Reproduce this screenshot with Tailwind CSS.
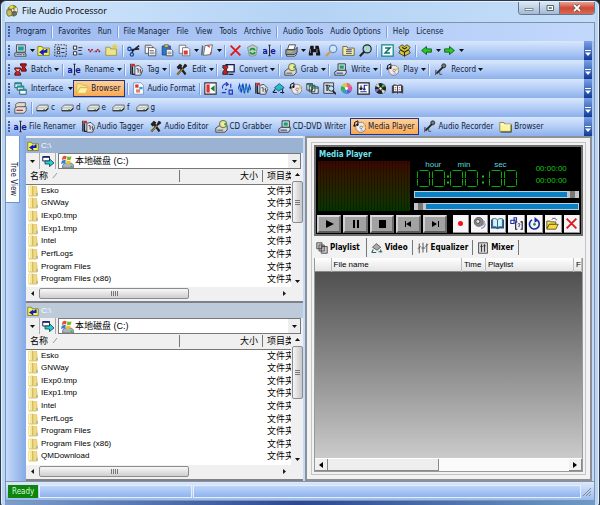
<!DOCTYPE html>
<html lang="en">
<head>
<meta charset="utf-8">
<meta name="viewport" content="width=device-width, initial-scale=1">
<title>File Audio Processor</title>
<script src="https://cdn.jsdelivr.net/npm/@tailwindcss/browser@4"></script>
</head>
<body class="bg-[#20242c] font-['DejaVu_Sans_Condensed','DejaVu_Sans',sans-serif] text-[8px] leading-[12px] text-[#101c38]">

<svg class="hidden" aria-hidden="true">
  <symbol id="logo" viewBox="0 0 16 16"><circle cx="9" cy="7" r="6.5" fill="#a8a020" stroke="#55561a"/><path d="M9 7 14 3A6 6 0 0 1 15 9Z" fill="#e8e8d0"/><path d="M9 7 4 2.500A6 6 0 0 1 10 1Z" fill="#e3dc4a"/><circle cx="9" cy="7" r="2" fill="#fff" stroke="#444"/><path d="M1 7 6 6 8 10 8 14 3 15 1 12Z" fill="#c8c050" stroke="#555"/><path d="M9 10 13 9 14 13 10 15Z" fill="#777" stroke="#444"/></symbol>
  <symbol id="pc" viewBox="0 0 16 16"><path d="M3 1h11v9H3z" fill="#d8d8d8" stroke="#334"/><path d="M5 3h7v5H5z" fill="#18a0a0"/><path d="M1 11h13l1 4H1z" fill="#e4e4e4" stroke="#334"/><path d="M3 13h7" stroke="#2a60c0"/><path d="M11 13h2" stroke="#0a0" stroke-width="1.500"/></symbol>
  <symbol id="up" viewBox="0 0 16 16"><path d="M1 3h5l1 2h8v9H1z" fill="#f6f05a" stroke="#77701c"/><path d="M12 6v4H5M7.500 7.500 4 10l3.500 2.500z" fill="#1020c0" stroke="#1020c0" stroke-width="1.600"/></symbol>
  <symbol id="sel" viewBox="0 0 16 16"><path d="M1 1h14v14H1z" fill="none" stroke="#111" stroke-dasharray="2 1.500"/><path d="M4 4h3v3H4zM4 9h3v3H4z" fill="#fff" stroke="#111"/><path d="M9 5.500h4M9 10.500h4" stroke="#111"/></symbol>
  <symbol id="list" viewBox="0 0 16 16"><path d="M3 2.500h4v4H3zM3 9.500h4v4H3z" fill="#fff" stroke="#111"/><path d="M9 4.500h5M9 8h4M9 12.500h5" stroke="#111"/></symbol>
  <symbol id="dots" viewBox="0 0 16 16"><path d="M0 6h2v2H0zM2 8h2v2H2zM4 6h2v2H4zM7 9h1v1H7z" fill="#a01024"/><path d="M9 8h2v2H9zM11 6h2v2h-2zM13 8h2v2h-2z" fill="#a01024"/></symbol>
  <symbol id="newf" viewBox="0 0 16 16"><path d="M1 4h5l1 2h7v8H1z" fill="#eee48a" stroke="#9a8c30"/><path d="M12 0v7M8.500 3.500h7M9.500 1l5 5M14.500 1l-5 5" stroke="#e8cc20" stroke-width="1.100"/></symbol>
  <symbol id="cut" viewBox="0 0 16 16"><path d="m15 2-9 7M15 6 5 7" stroke="#223" stroke-width="2"/><circle cx="3" cy="6" r="2" fill="none" stroke="#1a4ca0" stroke-width="1.600"/><circle cx="6" cy="13" r="2" fill="none" stroke="#1a4ca0" stroke-width="1.600"/><path d="M6 11 8 7" stroke="#223" stroke-width="1.500"/></symbol>
  <symbol id="copy" viewBox="0 0 16 16"><path d="M1.500 1.500h7l2 2v8h-9z" fill="#fff" stroke="#444"/><path d="M5.500 4.500h7l2 2v8h-9z" fill="#fff" stroke="#444"/><path d="M7 8h5M7 10h6M7 12h6M3 4h4" stroke="#667"/></symbol>
  <symbol id="paste" viewBox="0 0 16 16"><path d="M1.500 2.500h10v11h-10z" fill="#2a78d0" stroke="#123c80"/><path d="M4 1h5v3H4z" fill="#e8d060" stroke="#554"/><path d="M6.500 6.500h6l2 2v6h-8z" fill="#fff" stroke="#444"/><path d="M8 10h5M8 12h5" stroke="#667"/></symbol>
  <symbol id="clone" viewBox="0 0 16 16"><path d="M1.500 1.500h8v10h-8z" fill="#fff" stroke="#667"/><path d="M5.500 4.500h7l2 2v8h-9z" fill="#fff" stroke="#667"/><path d="M7 8h5v5H7z" fill="#e03a3a"/></symbol>
  <symbol id="rot" viewBox="0 0 16 16"><path d="m5 2 9-1-2 12-9 1z" fill="#fff" stroke="#555"/><path d="M2 2 1 14" stroke="#667" stroke-width="2"/><path d="M8 2l3 2M13 10l-2 2" stroke="#e03a3a" stroke-width="1.500"/></symbol>
  <symbol id="x" viewBox="0 0 16 16"><path d="M2 2 14 14M14 2 2 14" stroke="#e01818" stroke-width="2.200"/></symbol>
  <symbol id="bin" viewBox="0 0 16 16"><path d="M2 4 8 1l6 3-2 10-5 1-3-1z" fill="#c4ccc8" stroke="#788"/><path d="M5 8c1-3 5-3 6 0M11 10c-1 3-5 3-6 0" fill="none" stroke="#109830" stroke-width="2"/></symbol>
  <symbol id="ae" viewBox="0 0 16 16"><text x="-1" y="12" font-family="DejaVu Sans" font-size="10" font-weight="bold" fill="#181890">a</text><text x="9" y="12" font-family="DejaVu Sans" font-size="10" font-weight="bold" fill="#181890">e</text><path d="M6.500 1.500H8v13H6.500M9.500 1.500H8v13h1.500" fill="none" stroke="#222"/></symbol>
  <symbol id="print" viewBox="0 0 16 16"><path d="M5 1h8l-2 6H3z" fill="#fff" stroke="#333"/><path d="M1 7h11l3-3v6l-3 3H1z" fill="#9098a0" stroke="#333"/><path d="M2 13h10l2-2v2l-2 2H2z" fill="#ddd" stroke="#333"/><path d="M3 9.500h6" stroke="#e8d040"/></symbol>
  <symbol id="bino" viewBox="0 0 16 16"><path d="M3 2h4v4h2V2h4l2 9v3h-5v-4H6v4H1v-3z" fill="#151515"/><path d="M3 11V6M11 11V6" stroke="#aaa"/></symbol>
  <symbol id="zoom" viewBox="0 0 16 16"><circle cx="10" cy="6" r="4.500" fill="#cbe6fa" stroke="#6a90c0" stroke-width="1.500"/><path d="m7 9-6 6" stroke="#d09a50" stroke-width="2.500"/></symbol>
  <symbol id="flist" viewBox="0 0 16 16"><path d="M1 3h5l1 2h8v9H1z" fill="#f6f08a" stroke="#555"/><path d="M5 7h7M5 9h7M5 11.500h7" stroke="#22a"/></symbol>
  <symbol id="mag" viewBox="0 0 16 16"><circle cx="10" cy="6" r="5" fill="#a8d8d0" stroke="#222" stroke-width="1.400"/><path d="m7 9-6 6" stroke="#222" stroke-width="2.400"/></symbol>
  <symbol id="z" viewBox="0 0 16 16"><path d="M1 1h14v14H1z" fill="#fff" stroke="#0a8888" stroke-width="1.500"/><path d="M5 5h6L5 11h6" fill="none" stroke="#0a7070" stroke-width="1.800"/></symbol>
  <symbol id="box" viewBox="0 0 16 16"><path d="m1 4 4-3 3 2 3-2 4 3-2 3 2 4-7 4-7-4 2-4z" fill="#d8c830" stroke="#333"/><path d="m3 7 5 3 5-3M8 10v5M5 4l3 2 3-2" fill="none" stroke="#222" stroke-width="1.300"/></symbol>
  <symbol id="left" viewBox="0 0 16 16"><path d="M2 8 8 3v3h6v4H8v3z" fill="#20d020" stroke="#124a12"/></symbol>
  <symbol id="right" viewBox="0 0 16 16"><path d="M14 8 8 3v3H2v4h6v3z" fill="#20d020" stroke="#124a12"/></symbol>
  <symbol id="batch" viewBox="0 0 16 16"><path d="M8 1h7v2l-2 2 2 3v2H9V8l2-3-3-2z" fill="#c01818" stroke="#400"/><path d="M1 6h7v2L6 10l2 3v2H1v-2l2-3-2-2z" fill="#d02020" stroke="#311"/><path d="M2 8h5l-2 2z" fill="#fff"/></symbol>
  <symbol id="tag" viewBox="0 0 16 16"><path d="M1 1v13M3 4v10h4" stroke="#222" fill="none" stroke-width="1.500"/><path d="M2 1h4v3H2z" fill="#e02020"/><path d="m6 4 5-1 5 5-3 7H6z" fill="#e8e8f0" stroke="#333"/><path d="M8 7h2v5M12 7.500c2 0 2 2 0 2 2 0 2 3 0 3" fill="none" stroke="#222"/></symbol>
  <symbol id="edit" viewBox="0 0 16 16"><path d="M2 5 6 1l3 2-1 2 6 8-2 2-6-8-2 1z" fill="#222"/><path d="M14 2 3 14" stroke="#222" stroke-width="2.500"/><path d="m10 7-8 8" stroke="#c09020" stroke-width="1.300"/><path d="m12 1 3 3-3 2-2-2z" fill="#222"/></symbol>
  <symbol id="conv" viewBox="0 0 16 16"><path d="M5 2h10v9H5z" fill="#f0f4f8" stroke="#181850" stroke-width="1.600"/><path d="M1 3h6v3L5 8l2 3v3H1v-3l2-3-2-2z" fill="#c02020" stroke="#222"/><path d="M8 14h6" stroke="#222" stroke-width="1.500"/></symbol>
  <symbol id="grab" viewBox="0 0 16 16"><path d="m1 10 4-3h10v5l-3 3H1z" fill="#d8d8d0" stroke="#333"/><circle cx="10" cy="5" r="4.500" fill="#e8e888" stroke="#555"/><path d="m10 5 4-2v4z" fill="#30b040"/><circle cx="10" cy="5" r="1" fill="#fff"/><path d="M3 12.500h7" stroke="#333"/></symbol>
  <symbol id="write" viewBox="0 0 16 16"><path d="M5 1h9v8H5z" fill="#cce8e0" stroke="#222"/><path d="M7 3h5v4H7z" fill="#1a9a80"/><path d="m1 11 3-2h11v3l-2 3H1z" fill="#ddd" stroke="#222"/><path d="M3 12.500h8" stroke="#2040a0" stroke-width="1.300"/></symbol>
  <symbol id="play" viewBox="0 0 16 16"><circle cx="9.500" cy="9" r="6.200" fill="#f4e6e6" stroke="#807474"/><path d="m10 9 4-4 1.500 4z" fill="#e8d060"/><path d="m10 9-1 5.500 4-1z" fill="#a8c8ec"/><circle cx="10" cy="9" r="1.500" fill="#fff" stroke="#777"/><path d="M2 7V3l4-2v5" fill="none" stroke="#111" stroke-width="1.200"/><circle cx="1.800" cy="7" r="1.400" fill="#111"/><circle cx="5.400" cy="6" r="1.400" fill="#111"/></symbol>
  <symbol id="mic" viewBox="0 0 16 16"><circle cx="12" cy="3.500" r="2.500" fill="#777" stroke="#222"/><path d="M11 5 3 13" stroke="#222" stroke-width="2.200"/><path d="M2 15V9l3 2M7 10v4h3" fill="none" stroke="#444"/></symbol>
  <symbol id="intf" viewBox="0 0 16 16"><path d="M1 1h8v6H1z" fill="#e8f4f4" stroke="#145"/><path d="M1 2h8" stroke="#18989a" stroke-width="2"/><path d="M4 5h8v5H4z" fill="#e8f4f4" stroke="#145"/><path d="M4 6h8" stroke="#18989a" stroke-width="2"/><path d="M7 9h8v6H7z" fill="#fff" stroke="#145"/><path d="M7 10h8" stroke="#18989a" stroke-width="2"/></symbol>
  <symbol id="fopen" viewBox="0 0 16 16"><path d="M1 2h5l2 2h5v3H5l-4 7z" fill="#f4e48a" stroke="#d8b848"/><path d="M5 7h10l-3 7H1z" fill="#fbf0a4" stroke="#d8b848"/></symbol>
  <symbol id="afmt" viewBox="0 0 16 16"><path d="M2 1h9l3 3v11H2z" fill="#fff" stroke="#7090c0"/><path d="M4 3h4v4H4z" fill="#e03030"/><path d="M9 6h4v3H9z" fill="#30a0d0"/><path d="M5 9h5v4H5z" fill="#e08060"/></symbol>
  <symbol id="pic" viewBox="0 0 16 16"><path d="M1 1h14v14H1z" fill="#fff" stroke="#333" stroke-width="1.400"/><path d="M3 3h4v10H3z" fill="#e03030"/><path d="m13 4-5 4 5 4z" fill="#108040"/></symbol>
  <symbol id="abc" viewBox="0 0 16 16"><path d="M2 8c-1-4 3-7 6-5M6 0l3 3-3 2" fill="none" stroke="#2038b0" stroke-width="1.300"/><path d="M10 10h4v5h-4zM5 9h2M1 13h5M12 2v5" fill="none" stroke="#2038b0" stroke-width="1.400"/></symbol>
  <symbol id="wave" viewBox="0 0 16 16"><path d="M0 9 2 3l2 10L6 2l2 12 2-12 2 11 2-9 2 6" fill="none" stroke="#1838d0" stroke-width="1.300"/><path d="m1 12 3-8 3 9 3-9 3 9 2-8" fill="none" stroke="#20a0a0"/></symbol>
  <symbol id="dia" viewBox="0 0 16 16"><path d="m9 2 6 5-7 4-5-4z" fill="#20c0c8" stroke="#246"/><path d="M1 13h5M4 9l-3 4M13 9v5M10 13h5" stroke="#123" stroke-width="1.300"/></symbol>
  <symbol id="stack" viewBox="0 0 16 16"><path d="M1 2h7v8H1zM4 4h7v8H4zM7 6h8v8H7z" fill="#e4ecec" stroke="#222"/><path d="M1 3h7M4 5h7M7 7.500h8" stroke="#268070" stroke-width="1.500"/></symbol>
  <symbol id="tq" viewBox="0 0 16 16"><path d="M1 1h12v13H1z" fill="#d8e0f0" stroke="#222"/><path d="M3 4h4M5 4v7M8 4v7" stroke="#222" stroke-width="1.500"/><circle cx="10" cy="8" r="3.300" fill="#bde8f0" stroke="#222"/><path d="m12 11 4 4" stroke="#222" stroke-width="2"/></symbol>
  <symbol id="wheel" viewBox="0 0 16 16"><g stroke="none"><path d="M8 8V1a7 7 0 0 1 6 3.500z" fill="#e87060"/><path d="m8 8 6-3.500a7 7 0 0 1 0 7z" fill="#e050a0"/><path d="m8 8 6 3.500A7 7 0 0 1 8 15z" fill="#6060d0"/><path d="M8 8v7a7 7 0 0 1-6-3.500z" fill="#30a0c0"/><path d="m8 8-6 3.500a7 7 0 0 1 0-7z" fill="#30b050"/><path d="M8 8 2 4.500A7 7 0 0 1 8 1z" fill="#d8c850"/></g><circle cx="8" cy="8" r="1.800" fill="#fff"/></symbol>
  <symbol id="ndoc" viewBox="0 0 16 16"><path d="M1 1h14v14H1z" fill="#fff" stroke="#222" stroke-width="1.500"/><path d="M9 9V4h4M4 5h2M4 12h8" fill="none" stroke="#2030a0" stroke-width="1.500"/><circle cx="5" cy="8" r="2" fill="#222"/><circle cx="9" cy="9" r="1.500" fill="#2030a0"/></symbol>
  <symbol id="bdisc" viewBox="0 0 16 16"><circle cx="8" cy="8" r="6.800" fill="#222"/><path d="M8 8 2 5l3-3.500zM8 8l6 3-3 3.500z" fill="#d8e0c0"/><path d="m8 8 3-6 3 3z" fill="#50b060"/><path d="M8 8 3 13l-1.500-4z" fill="#8070c0"/><circle cx="8" cy="8" r="2" fill="#fff" stroke="#222"/></symbol>
  <symbol id="book" viewBox="0 0 16 16"><path d="m1 5 3-2 4 1 4-1 3 2v9l-6-1-1 2-1-2-6 1z" fill="#444"/><path d="M3 4h4l1 1 1-1h4v8H9l-1 1-1-1H3z" fill="#fff" stroke="#222"/><path d="M8 5v8" stroke="#222"/><path d="M4.500 7h2M4.500 9.500h2M9.500 7h2M9.500 9.500h2" fill="none" stroke="#903090"/></symbol>
  <symbol id="drvs" viewBox="0 0 16 16"><path d="m2 4 3-2h9v4l-3 2H2z" fill="#e8d8c8" stroke="#555"/><path d="m1 9 3-2h11v5l-3 3H1z" fill="#dedede" stroke="#444"/><path d="M3 11.500h8" stroke="#b03020" stroke-width="1.500"/></symbol>
  <symbol id="drv" viewBox="0 0 16 16"><path d="m1 8 3-3h11v4l-3 3H1z" fill="#e6e6e6" stroke="#555"/><path d="M1 8.500h11l3-3" fill="none" stroke="#aaa"/><path d="M1 12h11l3-3" fill="none" stroke="#222" stroke-width="1.500"/><path d="M9 10.500h2" stroke="#0a0"/></symbol>
  <symbol id="fold" viewBox="0 0 16 16"><path d="M1 3h5l1 2h8v9H1z" fill="#fbf3a0" stroke="#8a7c28"/><path d="M2 6h12" stroke="#fff"/><path d="M15 6v9H2" fill="none" stroke="#333"/></symbol>
  <symbol id="zipf" viewBox="0 0 10 12"><path d="M0 1 5 0v11H0z" fill="#f6e69a"/><path d="M5 1h4l1 10H5z" fill="#e8d07a"/><path d="M4.500 1v10" stroke="#d8bc5c"/><path d="M1.500 2v8" stroke="#fff8d0"/><path d="M7 2v8" stroke="#f4e49c"/><path d="M9 8v2.500" stroke="#68b0c8"/><path d="M1 11h8" stroke="#dcc478"/></symbol>
  <symbol id="win" viewBox="0 0 16 16"><path d="M4 10h9l3 3v3H2v-3z" fill="#a8b4bc" stroke="#667"/><path d="M12 14h2" stroke="#0c0" stroke-width="1.500"/><path d="M2 2c2-2 4-1 5-.500L6 5.500C5 5 3 5 1 6z" fill="#e85028"/><path d="M8 1.500c2 1 3 1 5 0L12 5.500c-2 1-3 1-5 0z" fill="#70b830"/><path d="M1 7c2-1 4-1 5-.500l-1 4c-1-.500-3-.500-5 .500z" fill="#3080d8"/><path d="M7 6.500c2 1 3 1 5 0l-1 4c-2 1-3 1-5 0z" fill="#f0c020"/></symbol>
  <symbol id="swap" viewBox="0 0 16 16"><path d="M1 2h9v6H1z" fill="#fff" stroke="#1a2060" stroke-width="1.300"/><path d="M1 3h9" stroke="#1a2060" stroke-width="1.500"/><path d="M4 8h6V5l6 5.500-6 5V12H4z" fill="#20d0d0" stroke="#134"/></symbol>
  <symbol id="spk" viewBox="0 0 16 16"><circle cx="7" cy="6" r="5.500" fill="#888" stroke="#555"/><circle cx="6" cy="5.500" r="2.500" fill="#ddd" stroke="#444"/><path d="M9 11c3 0 5-3 5-6M10 14c4-1 5-4 5-6" fill="none" stroke="#9090b8" stroke-width="1.500"/></symbol>
  <symbol id="bbook" viewBox="0 0 16 16"><path d="M0 3h6l2 1 2-1h6v11h-6l-2 1-2-1H0z" fill="#1a5a90"/><path d="M2 2h4l2 1.500V13l-2-1H2zM14 2h-4L8 3.500V13l2-1h4z" fill="#d8f0fa" stroke="#267"/></symbol>
  <symbol id="rand" viewBox="0 0 16 16"><path d="M1 4h4v4H1zM5 1h3v3H5z" fill="#fff" stroke="#1828a0" stroke-width="1.300"/><path d="M9 6H7v9h2M13 6h2v9h-2" fill="none" stroke="#111" stroke-width="1.300"/><path d="M10 9c0-1.500 2.500-1.500 2 .500L11 11v1.500" fill="none" stroke="#1828a0" stroke-width="1.200"/></symbol>
  <symbol id="loop" viewBox="0 0 16 16"><path d="M5 3.500a6 6 0 1 0 7 1" fill="none" stroke="#1828a0" stroke-width="2"/><path d="m8 0 5 4-5 3z" fill="#1828a0"/><circle cx="8" cy="9" r="1.700" fill="#10a040"/></symbol>
  <symbol id="ofold" viewBox="0 0 16 16"><path d="M1 5h4l1 1h6v3H4l-3 5z" fill="#f0e060" stroke="#544408"/><path d="M4 9h11l-3 6H1z" fill="#f8d840" stroke="#544408"/><path d="M7 3c2-2 5-2 6 1" fill="none" stroke="#222"/></symbol>
  <symbol id="gstack" viewBox="0 0 16 16"><path d="M1 1h7v8H1zM4 4h7v8H4zM7 6h8v9H7z" fill="#c8c8c8" stroke="#333"/></symbol>
  <symbol id="gvid" viewBox="0 0 16 16"><path d="m7 2 6 5-5 4-6-4z" fill="#aaa" stroke="#444"/><path d="M1 14h6M3 10l-2 4M10 13h5M13 10v4" stroke="#1a6a6a" stroke-width="1.500"/></symbol>
  <symbol id="geq" viewBox="0 0 16 16"><path d="M3 2v13M8 1v13M13 2v12M1 9l4-3M6 8h5M11 6l4-3" stroke="#555" stroke-width="1.300"/></symbol>
  <symbol id="gmix" viewBox="0 0 16 16"><path d="M2 1h12v14H2z" fill="#d4d4d4" stroke="#333"/><path d="M6 3v10M10 3v10M4.500 6h3M8.500 5h3" stroke="#333" stroke-width="1.300"/></symbol>
</svg>

<div class="flex min-h-screen w-full flex-col rounded-t-md rounded-b border border-[#30384a] bg-[#bad6f5] px-1 shadow-[inset_0_0_0_1px_#e4f2ff]">

  <header class="mt-px flex h-5 shrink-0 items-start justify-between bg-linear-to-r from-[#d2e6fb] via-[#b4d3f5] to-[#c4def8]">
    <h1 class="flex items-center gap-1 pt-px pl-px font-['Open_Sans','Noto_Sans',sans-serif] text-[9px] leading-[16px] text-black">
      <svg class="size-3"><use href="#logo"/></svg>File Audio Processor
    </h1>
    <div class="flex h-[13px] overflow-hidden rounded-b border border-t-0 border-[#66788f]">
      <button aria-label="Minimize" class="grid w-[21px] place-items-center border-r border-[#66788f] bg-linear-to-b from-[#dbe8f6] to-[#a4bad4]"><svg viewBox="0 0 10 8" class="h-2 w-2.5"><path d="M1 4.500h8v2H1z" fill="#fff" stroke="#566" stroke-width=".7"/></svg></button>
      <button aria-label="Maximize" class="grid w-5 place-items-center border-r border-[#66788f] bg-linear-to-b from-[#dbe8f6] to-[#a4bad4]"><svg viewBox="0 0 10 8" class="h-2 w-2.5"><path d="M2 1.500h6.500v5H2z" fill="#fff" stroke="#566"/><path d="M4 3.500h2.500v1H4z" fill="#9ab" stroke="#566" stroke-width=".7"/></svg></button>
      <button aria-label="Close" class="grid w-[34px] place-items-center bg-linear-to-b from-[#e8a090] via-[#cc4a38] to-[#d86a50]"><svg viewBox="0 0 10 8" class="h-2 w-2.5"><path d="m2 1 6 6M8 1 2 7" stroke="#544" stroke-width="3"/><path d="m2 1 6 6M8 1 2 7" stroke="#fff" stroke-width="1.800"/></svg></button>
    </div>
  </header>

  <div class="flex flex-1 flex-col border border-[#7f93ad] bg-[#a9c5f3]">
    <nav id="menu" class="flex h-[18px] shrink-0 items-center gap-px bg-linear-to-r from-[#9dbaf0] to-[#c2d8fb]"></nav>
    <div id="bars"></div>

    <main class="flex flex-1 bg-[#c3daf9] pr-0.5">
      <aside class="flex w-5 shrink-0 bg-linear-to-r from-[#c4dafa] to-[#86aae4]">
        <button class="flex h-[67px] w-[14px] justify-center border-r border-b border-[#6f93cf] bg-white pt-5 [writing-mode:vertical-rl]">Tree View</button>
      </aside>
      <section id="files" class="flex min-w-0 flex-[277] flex-col bg-[#f0f0f0] pt-0.5"></section>

      <section class="ml-0.5 flex min-w-0 flex-[275] flex-col border-2 border-[#8d9196] bg-[#f2f2f2] p-1">
        <div class="flex flex-1 flex-col border border-[#c4c4c4] p-0.5">
          <div class="border-2 border-[#6e6e6e] bg-black p-px">
            <h2 class="pl-0.5 leading-[13px] font-bold text-[#6fe6f0]">Media Player</h2>
            <div class="flex gap-1 px-px">
              <div class="h-[50px] flex-[92] bg-linear-to-b from-[#3a0500] via-[#252200] to-[#003400]">
                <div class="h-full bg-[repeating-linear-gradient(90deg,transparent_0_2px,rgba(0,0,0,0.25)_2px_3px)]"></div>
              </div>
              <div class="flex flex-[166] flex-col">
                <div class="flex">
                  <div class="w-[108px] font-['Liberation_Sans',Arial,sans-serif] leading-[8px] text-[#5fd4dc]">
                    <div class="flex pl-1"><span class="w-[33px] text-center">hour</span><span class="w-8 text-center">min</span><span class="w-[45px] text-center">sec</span></div>
                    <svg role="img" aria-label="00:00:00" viewBox="0 0 108 19" class="h-[19px] w-[108px]" fill="none" stroke="#08a808">
                      <g id="lcd" stroke-width="1"><path d="M5.500 1.500h9M5.500 17.500h9M3.500 2.500v6.500M3.500 10v6.500M15.500 2.500v6.500M15.500 10v6.500"/></g>
                      <use href="#lcd" x="15"/><use href="#lcd" x="33"/><use href="#lcd" x="48"/><use href="#lcd" x="72"/><use href="#lcd" x="87"/>
                      <path d="M33 7.500h2M33 13.500h2M68 7.500h2M68 13.500h2" stroke-width="2" stroke="#20c020"/>
                    </svg>
                  </div>
                  <div class="flex-1 pt-0.5 pl-3.5 font-['Liberation_Sans',Arial,sans-serif] leading-[12px] text-[#14c814]"><div>00:00:00</div><div>00:00:00</div></div>
                </div>
                <div class="mt-[3px] flex flex-col gap-[5px]">
                  <input type="range" aria-label="Position" min="0" max="100" value="100" class="h-[7px] w-full appearance-none border border-[#b8d0dc] bg-[#0c80c4] [&::-webkit-slider-thumb]:h-[7px] [&::-webkit-slider-thumb]:w-[11px] [&::-webkit-slider-thumb]:appearance-none [&::-webkit-slider-thumb]:border-x-3 [&::-webkit-slider-thumb]:border-[#c4c4c4] [&::-webkit-slider-thumb]:bg-[#787878]">
                  <input type="range" aria-label="Volume" min="0" max="100" value="0" class="h-[7px] w-full appearance-none border border-[#b8d0dc] bg-[#0c80c4] [&::-webkit-slider-thumb]:h-[7px] [&::-webkit-slider-thumb]:w-[11px] [&::-webkit-slider-thumb]:appearance-none [&::-webkit-slider-thumb]:border-x-3 [&::-webkit-slider-thumb]:border-[#c4c4c4] [&::-webkit-slider-thumb]:bg-[#787878]">
                </div>
              </div>
            </div>
            <div class="mt-1 flex gap-1.5">
              <div id="transport" class="flex flex-[131] gap-0.5"></div>
              <div id="tools" class="flex flex-[128] gap-0.5"></div>
            </div>
          </div>

          <div role="tablist" class="mt-0.5 mb-px flex h-[19px] items-center font-bold text-black">
            <button role="tab" aria-selected="true" class="flex h-full items-center gap-0.5 border-r border-[#777] pr-1.5 pl-0.5"><svg class="size-3"><use href="#gstack"/></svg>Playlist</button>
            <button role="tab" class="flex h-[15px] items-center gap-0.5 border-r border-[#777] px-1"><svg class="size-3"><use href="#gvid"/></svg>Video</button>
            <button role="tab" class="flex h-[15px] items-center gap-0.5 border-r border-[#777] px-1"><svg class="size-3"><use href="#geq"/></svg>Equalizer</button>
            <button role="tab" class="flex h-[15px] items-center gap-0.5 border-r border-[#777] px-1"><svg class="size-3"><use href="#gmix"/></svg>Mixer</button>
          </div>
          <div class="flex flex-1 flex-col border border-t-0 border-[#999] bg-linear-to-b from-[#484848] to-[#d4d4d4]">
            <table class="w-full table-fixed border-collapse bg-linear-to-b from-white to-[#e2e2e2] font-['Liberation_Sans',Arial,sans-serif] leading-[13px] text-black">
              <thead><tr class="border-b border-[#888] text-left [&>th]:overflow-hidden [&>th]:border-r [&>th]:border-[#bbb] [&>th]:pl-0.5 [&>th]:font-normal [&>th]:whitespace-nowrap">
                <th class="w-4"></th><th>File name</th><th class="w-6">Time</th><th class="w-[88px]">Playlist</th><th class="w-2">F</th>
              </tr></thead>
            </table>
            <div class="flex-1"></div>
            <div class="flex h-[13px] border-t border-white bg-[#fafafa]">
              <button aria-label="Scroll left" class="grid w-[13px] place-items-center border-r border-b border-[#888] bg-[#f0f0f0]"><svg viewBox="0 0 6 6" class="size-1.5"><path d="M5 0v6L1 3z"/></svg></button>
              <div class="w-[111px] border-r border-b border-[#888] bg-[#eee]"></div>
              <div class="flex-1"></div>
              <button aria-label="Scroll right" class="grid w-[13px] place-items-center border-r border-b border-[#888] bg-[#f0f0f0]"><svg viewBox="0 0 6 6" class="size-1.5"><path d="M1 0v6l4-3z"/></svg></button>
            </div>
          </div>
        </div>
      </section>
    </main>

    <footer class="flex h-[19px] shrink-0 items-center gap-px border-t border-[#8793a5] bg-linear-to-b from-[#dce9fc] to-[#9bbcf0] p-0.5">
      <span class="bg-[#0b850b] px-1 leading-[13px] text-[#d9f5d9]">Ready</span>
      <span class="h-[13px] w-[153px] border border-[#e4effd] bg-linear-to-b from-[#bcd5fa] to-[#90b3ed]"></span>
      <span class="h-[13px] flex-1 border border-[#e4effd] bg-linear-to-b from-[#bcd5fa] to-[#90b3ed]"></span>
      <svg viewBox="0 0 10 12" class="h-3 w-2.5"><path d="M1 11 9 3M4 11l5-5M7 11l2-2" stroke="#808890"/></svg>
    </footer>
  </div>
  <div class="h-[5px] shrink-0 bg-linear-to-r from-[#7c9fd0] via-[#2d4794] to-[#6d9cc8]"></div>
</div>

<script>
const ic = (id, cls = 'size-[13px] shrink-0') => `<svg class="${cls}"><use href="#${id}"/></svg>`;
const sepOf = w => `<span class="flex ${w} shrink-0 justify-center"><i class="h-3 w-0.5 border-l border-[#7f9fd8] bg-[#e6f0ff]"></i></span>`;
const sep = sepOf('w-[5px]');
const grip = '<i class="mx-0.5 h-3 w-0.5 shrink-0 bg-[repeating-linear-gradient(180deg,#3f5f9f_0_2px,transparent_2px_3px)]"></i>';
const arrow = '<svg viewBox="0 0 7 4" class="h-[3px] w-[5px]"><path d="M0 0h7L3.500 4z" fill="#111"/></svg>';
const drop = `<button aria-label="More" class="flex w-1.5 shrink-0 justify-center">${arrow}</button>`;
const gap = '<span class="w-0.5 shrink-0"></span>';
const icon = id => `<button aria-label="${id}" class="flex w-[17px] shrink-0 justify-center">${ic(id)}</button>`;
const label = (id, t) => `<button class="flex shrink-0 items-center gap-0.5 px-0.5 whitespace-nowrap">${ic(id)}${t}</button>`;
const wide = (id, t) => `<button class="flex shrink-0 items-center gap-1 px-0.5 whitespace-nowrap">${ic(id)}${t}</button>`;
const active = (id, t) => `<button class="flex h-[17px] shrink-0 items-center gap-0.5 border border-[#26347e] bg-linear-to-b from-[#fdd09a] to-[#fba84e] pr-1 pl-0.5 whitespace-nowrap">${ic(id)}${t}</button>`;
const icons = s => s.split(' ').map(k => k === '|' ? sep : k === 'v' ? drop : icon(k)).join('');

document.getElementById('menu').innerHTML = grip + [['Program'], ['Favorites', 'Run'], ['File Manager', 'File', 'View', 'Tools', 'Archive'], ['Audio Tools', 'Audio Options'], ['Help', 'License']]
  .map(g => g.map(t => `<button class="px-[3px] whitespace-nowrap">${t}</button>`).join('')).join(sepOf('w-1'));

const rows = [
  icons('pc v up sel list dots newf | cut copy paste clone v rot v | x bin ae | print v bino zoom flist mag | z box | left v right v'),
  [['batch', 'Batch'], ['ae', 'Rename'], ['tag', 'Tag'], ['edit', 'Edit'], ['conv', 'Convert'], ['grab', 'Grab'], ['write', 'Write'], ['play', 'Play'], ['mic', 'Record']].map(([i, t]) => wide(i, t) + drop).join(sepOf('w-1.5')),
  wide('intf', 'Interface') + gap + drop + active('fopen', 'Browser') + sep + label('afmt', 'Audio Format') + sep + icons('pic abc wave tag dia play stack tq wheel ndoc bdisc book'),
  icons('drvs |') + ['c', 'd', 'e', 'f', 'g'].map(d => label('drv', d)).join(gap),
  [['ae', 'File Renamer'], ['tag', 'Audio Tagger'], ['edit', 'Audio Editor'], ['grab', 'CD Grabber'], ['write', 'CD-DVD Writer']].map(([i, t]) => label(i, t) + gap).join('') + active('play', 'Media Player') + gap + label('mic', 'Audio Recorder') + gap + label('fold', 'Browser'),
];
document.getElementById('bars').innerHTML = rows.map(r => `
  <div class="flex h-[19px] items-stretch">
    <div role="toolbar" class="flex min-w-0 flex-1 items-center overflow-hidden bg-linear-to-b from-[#d9e7fc] via-[#b4cef7] to-[#8db0ec]">${grip}${r}</div>
    <button aria-label="Toolbar options" class="flex w-2 items-end justify-center bg-linear-to-b from-[#7ba2e8] to-[#123a94] pb-1"><svg viewBox="0 0 6 6" class="size-1.5"><path d="M0 .500h6" stroke="#fff"/><path d="M0 2.500h6L3 6z" fill="#fff"/></svg></button>
    <span class="w-0.5"></span>
  </div>`).join('');

const panel = (head, names, listH, tableH, thumbH) => `
  <div class="border-b-2 border-[#7e8288] pb-0.5">
    <h2 class="flex h-[15px] items-center gap-0.5 pl-px font-['Liberation_Sans',Arial,sans-serif] text-white ${head}">${ic('up', 'size-3 shrink-0')}C:\\</h2>
    <div class="flex h-4 items-stretch">
      <button aria-label="History" class="grid w-3.5 place-items-center border-r border-[#aaa]">${arrow}</button>
      <button aria-label="Swap" class="grid w-4 place-items-center border-r border-[#aaa]">${ic('swap', 'size-3 shrink-0')}</button>
      <button role="combobox" aria-label="Drive" class="mr-0.5 ml-0.5 flex flex-1 items-center gap-px border border-[#777] bg-white pl-0.5 font-['Liberation_Sans','Noto_Sans_CJK_SC',sans-serif] text-[9px] text-black">${ic('win')}<span class="flex-1 text-left">本地磁盘 (C:)</span><span class="grid h-full w-3 place-items-center bg-[#eee]">${arrow}</span></button>
    </div>
    <div class="flex">
      <div class="min-w-0 flex-1 overflow-hidden bg-white ${listH}">
        <table class="w-full table-fixed border-collapse font-['Liberation_Sans','Noto_Sans_CJK_SC',sans-serif] text-black">
          <thead><tr class="h-[15px] border-b border-[#777] bg-[#f0f0f0] text-[9px] [&>th]:overflow-hidden [&>th]:p-0 [&>th]:leading-[12px] [&>th]:font-normal [&>th]:whitespace-nowrap">
            <th><span class="flex items-center border-r border-[#777] pl-1">名称<svg viewBox="0 0 6 6" class="ml-1 size-1.5"><path d="M1 5 5 0" stroke="#999"/></svg></span></th>
            <th class="w-[83px] text-right"><span class="block border-r border-[#777] pr-1">大小</span></th>
            <th class="w-7 text-left"><span class="block pl-1">项目类型</span></th></tr></thead>
        </table>
        <table class="w-full table-fixed border-collapse font-['Liberation_Sans','Noto_Sans_CJK_SC',sans-serif] text-black ${tableH}">
          <tbody>${names.map(n => `<tr><td class="p-0 leading-[12px]"><span class="flex items-center gap-[3px] pl-0.5">${ic('zipf', 'h-3 w-2.5 shrink-0')}${n}</span></td><td class="w-[83px] p-0"></td><td class="w-7 overflow-hidden p-0 pl-1 text-[9px] leading-[12px] whitespace-nowrap">文件夹</td></tr>`).join('')}</tbody>
        </table>
      </div>
      <div class="flex w-3 flex-col items-center bg-[#f0f0f0]">
        <span class="grid h-3 rotate-180 place-items-center">${arrow}</span>
        <span class="grid w-[11px] place-items-center rounded-xs border border-[#8c8c8c] bg-linear-to-r from-[#f6f6f6] to-[#c8c8c8] ${thumbH}"><i class="h-[5px] w-[5px] bg-[repeating-linear-gradient(180deg,#777_0_1px,transparent_1px_2px)]"></i></span>
        <span class="flex-1"></span><span class="grid h-3 place-items-center">${arrow}</span>
      </div>
    </div>
    <div class="flex h-3 items-center bg-[#f0f0f0]">
      <span class="grid w-[13px] rotate-90 place-items-center">${arrow}</span>
      <span class="grid h-[11px] w-[150px] place-items-center rounded-xs border border-[#8c8c8c] bg-linear-to-b from-[#f8f8f8] to-[#cfcfcf]"><i class="h-[5px] w-[7px] bg-[repeating-linear-gradient(90deg,#777_0_1px,transparent_1px_2px)]"></i></span>
      <span class="flex-1"></span><span class="mr-3 grid w-[13px] -rotate-90 place-items-center">${arrow}</span>
    </div>
  </div>`;
const names = ['Esko', 'GNWay', 'IExp0.tmp', 'IExp1.tmp', 'Intel', 'PerfLogs', 'Program Files', 'Program Files (x86)'];
document.getElementById('files').innerHTML =
  panel('bg-[#9ab3d2]', names, 'h-[118px]', 'h-[101px]', 'h-[42px]') +
  panel('bg-[#bccada]', [...names, 'QMDownload'], 'h-[131px]', 'h-[113px]', 'h-[53px]');

document.getElementById('transport').innerHTML = [
  ['Play', 'M3 2l8 4-8 4z'], ['Pause', 'M3 2h2v8H3zM7 2h2v8H7z'], ['Stop', 'M3 2h7v8H3z'], ['Previous', 'M3 3h1v6H3zM9 3v6L4 6z'], ['Next', 'M9 3h1v6H9zM3 3v6l5-3z'],
].map(([n, d]) => `<button aria-label="${n}" class="grid h-[18px] flex-1 place-items-center border-2 border-t-[#dcdcdc] border-r-[#6c6c6c] border-b-[#5c5c5c] border-l-[#d0d0d0] bg-[#a2a2a2]"><svg viewBox="0 0 12 12" class="size-3"><path d="${d}"/></svg></button>`).join('');
document.getElementById('tools').innerHTML = ['rec', 'spk', 'bbook', 'rand', 'loop', 'ofold', 'x']
  .map(i => `<button aria-label="${i}" class="grid h-[18px] flex-1 place-items-center border-r border-b border-[#999] bg-[#f6f4f8]">${i === 'rec' ? '<i class="size-[5px] rounded-full bg-[#f01010]"></i>' : ic(i)}</button>`).join('');
</script>
</body>
</html>
